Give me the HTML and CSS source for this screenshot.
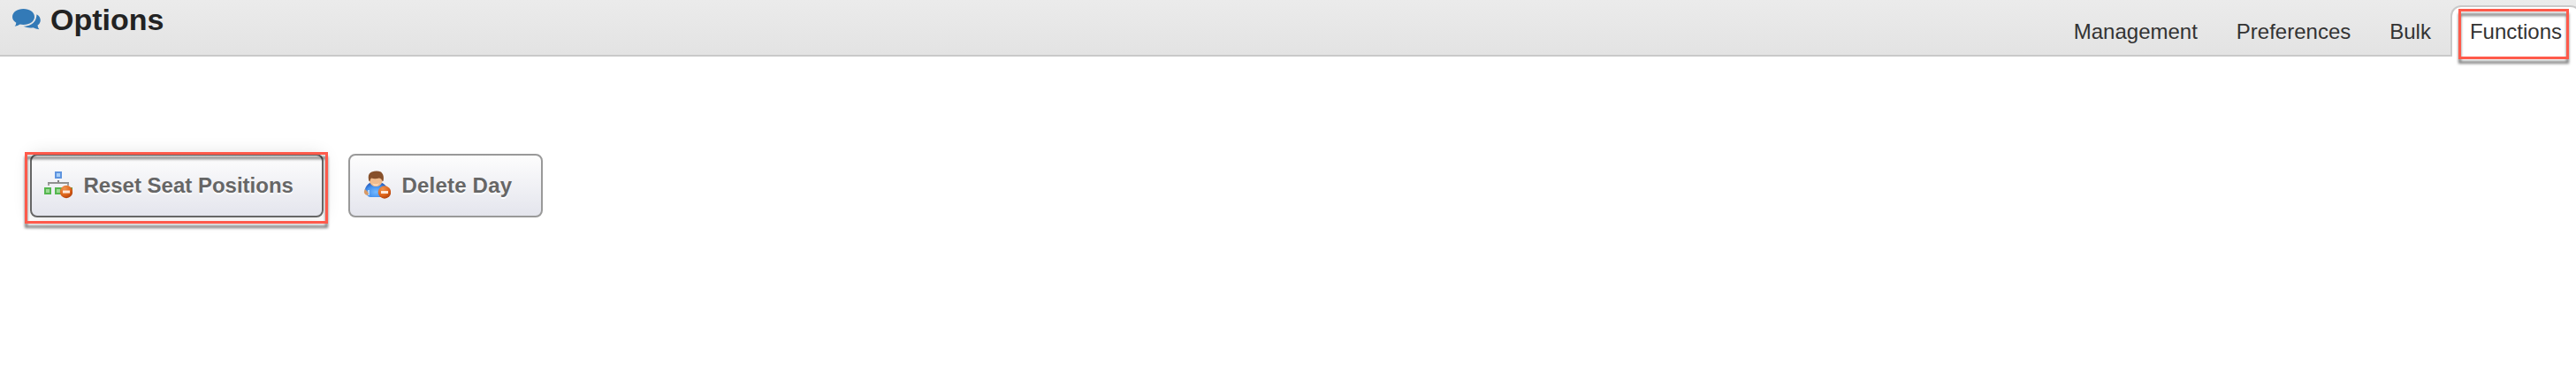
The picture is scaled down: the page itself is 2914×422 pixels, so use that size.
FILE: index.html
```html
<!DOCTYPE html>
<html lang="en">
<head>
<meta charset="utf-8">
<title>Options</title>
<link rel="stylesheet" href="styles.css">
</head>
<body>
<header class="header">
  <h1 class="title">
    <svg class="title-icon" viewBox="0 0 32 26" aria-hidden="true">
      <path d="M27.500 7.200C32.400 9.500 33.500 16.500 28.600 19.500Q28.500 22 30.300 24.300Q26.500 24 23.500 22.300Q17.500 23.300 12.500 20.800Q27 20 27.500 7.200Z"/>
      <path d="M12.500 1C19.500 1 25 4.800 25 10S19.500 19 12.500 19Q10.500 19 8.600 18.600Q6 20.600 2.700 20.800Q4.200 19.200 4.300 16.700Q0 14 0 10C0 4.800 5.500 1 12.500 1Z"/>
    </svg>
    Options
  </h1>
  <nav class="tabs">
    <a class="tab">Management</a>
    <a class="tab">Preferences</a>
    <a class="tab">Bulk</a>
    <a class="tab tab-active">Functions<span class="mark mark-tab"></span></a>
  </nav>
</header>
<main class="actions">
  <button class="action action-focus">
    <svg class="action-icon" viewBox="0 0 32 32" aria-hidden="true">
      <defs>
        <radialGradient id="minus" cx=".35" cy=".25" r=".8"><stop offset="0" stop-color="#ee9350"/><stop offset=".6" stop-color="#e0661c"/><stop offset="1" stop-color="#ad3c08"/></radialGradient>
        <linearGradient id="line" x2="0" y2="1"><stop offset="0" stop-color="#777"/><stop offset="1" stop-color="#aaa"/></linearGradient>
      </defs>
      <path d="M15 11h2v2h11v4h-2v-2H6v2H4v-4h11z" fill="url(#line)"/>
      <path d="M12 1h8v8h-8z" fill="#5e94df"/><path d="M14 3h4v4h-4z" fill="#a9cff8"/>
      <path d="M0 19h8v8H0zM12 19h8v8h-8z" fill="#55b750"/><path d="M2 21h4v4H2zM14 21h4v4h-4z" fill="#9cd994"/>
      <path d="M28 19h4v5h-4z" fill="#6da34c"/>
      <circle cx="25" cy="24" r="7.200" fill="url(#minus)"/><path d="M21 22.500h8v3h-8z" fill="#ffe8d9"/>
    </svg>
    <span>Reset Seat Positions</span>
    <span class="mark mark-action"></span>
  </button>
  <button class="action action-delete">
    <svg class="action-icon" viewBox="0 0 32 32" aria-hidden="true">
      <defs><radialGradient id="shirt" cx=".5" cy=".65" r=".65"><stop offset="0" stop-color="#76baff"/><stop offset=".65" stop-color="#3f8eee"/><stop offset="1" stop-color="#2859b8"/></radialGradient></defs>
      <path d="M9 13.500Q4 16 2.500 22Q5 30 9 30H25Q29 26 28 20Q26 15 21 13.500Z" fill="url(#shirt)"/>
      <path d="M7 22v6" stroke="#d6eaff" stroke-width="1.500"/>
      <path d="M3 21Q1 24 2.500 26Q4 29 7 27Q6 23 3 21Z" fill="#d99a66"/>
      <path d="M8 7h14.500v6Q20.500 18 15.300 18T8 13Z" fill="#efbb8d"/>
      <path d="M7.500 12Q5 4 10.500 1.500Q16-.5 21 1.500Q25 5 23.500 12L22 11.500Q22 9 19 8.500Q14 10 10 8.500Q8.500 10 8.500 12Z" fill="#87502a"/>
      <path d="M11 14q4 3 8 0l-2 3h-4z" fill="#fbdcbc"/>
      <circle cx="25" cy="24.500" r="7.200" fill="url(#minus)"/><path d="M21 23h8v3h-8z" fill="#ffe8d9"/>
    </svg>
    <span>Delete Day</span>
  </button>
</main>
</body>
</html>
```
FILE: styles.css
```css
html {
  overflow: hidden;
}
body {
  margin: 0;
  min-height: 100vh;
  background: #fff;
  font-family: "Liberation Sans", Arial, sans-serif;
}
.header {
  box-sizing: border-box;
  height: 64px;
  display: flex;
  justify-content: space-between;
  border-bottom: 2px solid #c9c9c9;
  background: linear-gradient(#ebebeb, #e3e3e3);
}
.title {
  margin: 0;
  padding: 2px 0 0 14px;
  height: 40px;
  display: flex;
  align-items: center;
  gap: 11px;
  font-size: 34px;
  line-height: 40px;
  color: #222;
}
.title-icon {
  width: 32px;
  height: 26px;
  fill: #337ab7;
}
.tabs {
  display: flex;
  height: 58px;
  margin: 6px -6px 0 0;
}
.tab {
  box-sizing: border-box;
  height: 58px;
  padding: 0 20px;
  border: 2px solid transparent;
  border-bottom: 0;
  border-radius: 12px 12px 0 0;
  font-size: 24px;
  line-height: 56px;
  color: #333;
}
.tab-active {
  position: relative;
  border-color: #c9c9c9;
  background: #fff;
}
.mark {
  position: absolute;
  box-sizing: border-box;
  border: 3px solid #ff5a4b;
  filter: drop-shadow(0 5px 1.5px rgba(0, 0, 0, .5));
  pointer-events: none;
}
.mark-tab {
  left: 7px;
  top: 2px;
  width: 125px;
  height: 57px;
}
.actions {
  display: flex;
  gap: 28px;
  padding: 110px 34px 30px;
}
.action {
  position: relative;
  box-sizing: border-box;
  height: 72px;
  margin: 0;
  padding: 0 0 0 14px;
  display: flex;
  align-items: center;
  gap: 12.5px;
  border: 2px solid #999;
  border-radius: 8px;
  background: linear-gradient(#fdfdfd, #e4e5ed);
  font: bold 24px/28px "Liberation Sans", Arial, sans-serif;
  color: #666;
  text-shadow: 0 2px 0 #fff;
  white-space: nowrap;
}
.action-focus {
  width: 332px;
  border-color: #666;
  box-shadow: 0 0 20px rgba(0, 0, 0, .12);
}
.action-delete {
  width: 220px;
  letter-spacing: .2px;
}
.action-icon {
  width: 32px;
  height: 32px;
  margin-bottom: 2px;
  flex: none;
}
.mark-action {
  left: -8px;
  top: -4px;
  width: 343px;
  height: 81px;
}
```
